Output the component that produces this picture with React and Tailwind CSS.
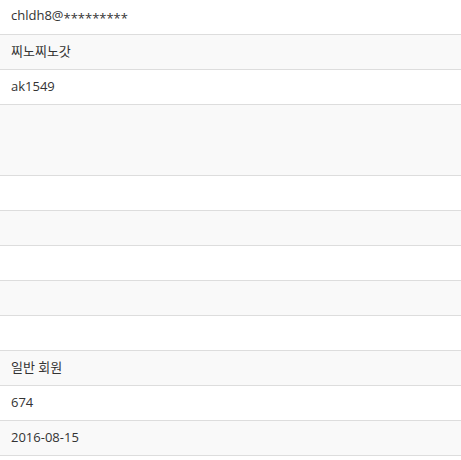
const rows = [
  { text: 'chldh8@', masked: '*********' },
  { text: '찌노찌노갓' },
  { text: 'ak1549' },
  { text: '', tall: true },
  { text: '' },
  { text: '' },
  { text: '' },
  { text: '' },
  { text: '' },
  { text: '일반 회원' },
  { text: '674' },
  { text: '2016-08-15' },
];

export default function App() {
  return (
    <div className="min-h-screen bg-white font-['Open_Sans','Noto_Sans_CJK_KR',sans-serif] text-[13px] text-[#333]">
      {rows.map((row, i) => (
        <div
          key={i}
          className={`flex items-center border-b border-[#dddddd] px-[11px] ${
            row.tall ? 'h-[71px]' : 'h-[35px]'
          } ${i % 2 === 1 ? 'bg-[#f9f9f9]' : 'bg-white'}`}
        >
          <span>
            {row.text}
            {row.masked && <span className="align-[-3px]">{row.masked}</span>}
          </span>
        </div>
      ))}
    </div>
  );
}
